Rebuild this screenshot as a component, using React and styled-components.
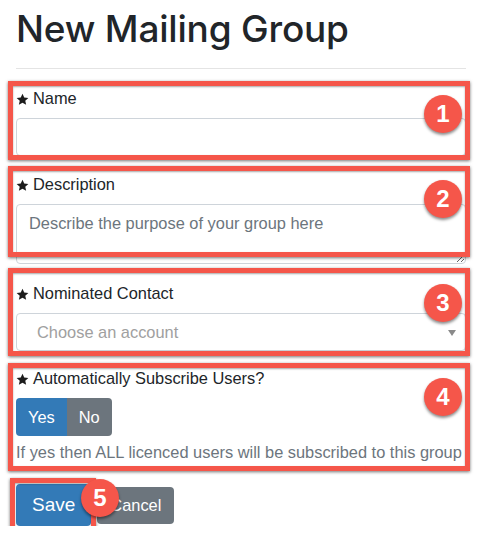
import React from "react";
import styled, { createGlobalStyle } from "styled-components";

const Global = createGlobalStyle`
  html, body { margin: 0; padding: 0; background: #fff; }
  body { font-family: "Liberation Sans", Arial, sans-serif; color: #212529; font-size: 16.4px; line-height: 24px; }
  * { box-sizing: border-box; }
`;

const Page = styled.div`
  width: 477px;
  padding: 6px 11px 0 16px;
`;

const Title = styled.h1`
  margin: 0 0 16px;
  font-family: "Inter", "Liberation Sans", sans-serif;
  font-weight: 500;
  font-size: 37px;
  line-height: 46px;
  letter-spacing: -0.2px;
  color: #212529;
`;

const Divider = styled.hr`
  margin: 0 0 17px;
  border: 0;
  border-top: 1px solid #e4e4e4;
`;

const FormGroup = styled.div`
  position: relative;
  margin-bottom: ${(p) => p.$mb ?? 16}px;
`;

const Label = styled.label`
  display: flex;
  align-items: center;
  gap: 4px;
  margin-bottom: 8px;
  font-size: 16.4px;
  line-height: 24px;
`;

const StarIcon = () => (
  <svg width="13" height="13" viewBox="0 0 24 24" style={{ marginTop: 2 }}>
    <path d="M12 1.5l3.2 7 7.6.8-5.7 5.1 1.6 7.5L12 18l-6.7 3.9 1.6-7.5L1.2 9.3l7.6-.8z" fill="#1c1c1c" />
  </svg>
);

const Input = styled.input`
  display: block;
  width: 100%;
  height: 38px;
  border: 1px solid #ced4da;
  border-radius: 4px;
  padding: 6px 12px;
  font: inherit;
`;

const TextArea = styled.textarea`
  display: block;
  width: 100%;
  height: 60px;
  border: 1px solid #ced4da;
  border-radius: 4px;
  padding: 6px 12px;
  font: inherit;
  font-size: 16.4px;
  line-height: 24px;
  resize: vertical;
  &::placeholder { color: #6c757d; }
`;

const Select = styled.div`
  display: flex;
  align-items: center;
  justify-content: space-between;
  height: 38px;
  border: 1px solid #ced4da;
  border-radius: 4px;
  padding: 0 9px 0 20px;
  color: #a0a0a0;
  font-size: 16.4px;
`;

const Caret = styled.span`
  width: 0;
  height: 0;
  border-left: 4px solid transparent;
  border-right: 4px solid transparent;
  border-top: 6px solid #8a8a8a;
  margin-top: 2px;
`;

const Toggle = styled.div`
  display: inline-flex;
  border-radius: 4px;
  overflow: hidden;
`;

const ToggleBtn = styled.button`
  border: 0;
  height: 38px;
  padding: 0 12px;
  font: inherit;
  font-size: 16.4px;
  color: #fff;
  background: ${(p) => (p.$active ? "#337ab7" : "#6c757d")};
`;

const Help = styled.div`
  margin-top: 4px;
  color: #6c757d;
  font-size: 16.4px;
  line-height: 24px;
  white-space: nowrap;
`;

const Actions = styled.div`
  position: relative;
  display: flex;
  align-items: center;
  gap: 6px;
  margin-top: 20px;
`;

const Button = styled.button`
  border: 0;
  border-radius: 4px;
  color: #fff;
  font-family: inherit;
  background: ${(p) => (p.$primary ? "#337ab7" : "#6c757d")};
  font-size: ${(p) => (p.$large ? 19 : 16.4)}px;
  height: ${(p) => (p.$large ? 42 : 37)}px;
  padding: 0 ${(p) => (p.$large ? 16 : 13)}px;
`;

const Highlight = styled.div`
  position: absolute;
  top: ${(p) => p.$t}px;
  bottom: ${(p) => p.$b}px;
  left: ${(p) => p.$l ?? -8}px;
  right: ${(p) => p.$r ?? -4}px;
  border: 5px solid #f5564a;
  box-shadow: 0 1px 3px rgba(0, 0, 0, 0.55), inset 0 1px 2px rgba(0, 0, 0, 0.35);
  pointer-events: none;
`;

const Badge = styled.div`
  position: absolute;
  top: ${(p) => p.$top}px;
  ${(p) => (p.$left != null ? `left: ${p.$left}px;` : `right: ${p.$right ?? 4}px;`)}
  width: 38px;
  height: 38px;
  border-radius: 50%;
  background: #f5564a;
  color: #fff;
  display: flex;
  align-items: center;
  justify-content: center;
  font-family: "Liberation Sans", Arial, sans-serif;
  font-weight: 700;
  font-size: 24px;
  box-shadow: 0 2px 3px rgba(0, 0, 0, 0.45);
  z-index: 2;
`;

export default function App() {
  return (
    <>
      <Global />
      <Page>
        <Title>New Mailing Group</Title>
        <Divider />

        <FormGroup>
          <Label><StarIcon />Name</Label>
          <Input />
          <Highlight $t={-5} $b={-4} />
          <Badge $top={9}>1</Badge>
        </FormGroup>

        <FormGroup $mb={17}>
          <Label><StarIcon />Description</Label>
          <TextArea placeholder="Describe the purpose of your group here" />
          <Highlight $t={-6} $b={7} />
          <Badge $top={8}>2</Badge>
        </FormGroup>

        <FormGroup $mb={15}>
          <Label><StarIcon />Nominated Contact</Label>
          <Select>
            <span>Choose an account</span>
            <Caret />
          </Select>
          <Highlight $t={-13} $b={-5} />
          <Badge $top={3}>3</Badge>
        </FormGroup>

        <FormGroup $mb={0}>
          <Label><StarIcon />Automatically Subscribe Users?</Label>
          <Toggle>
            <ToggleBtn $active>Yes</ToggleBtn>
            <ToggleBtn>No</ToggleBtn>
          </Toggle>
          <Help>If yes then ALL licenced users will be subscribed to this group</Help>
          <Highlight $t={-3} $b={-7} />
          <Badge $top={12}>4</Badge>
        </FormGroup>

        <Actions>
          <Button $primary $large>Save</Button>
          <Button>Cancel</Button>
          <Highlight $t={-6} $b={-6} $l={-6} $r={370} />
          <Badge $top={-5} $left={65}>5</Badge>
        </Actions>
      </Page>
    </>
  );
}
